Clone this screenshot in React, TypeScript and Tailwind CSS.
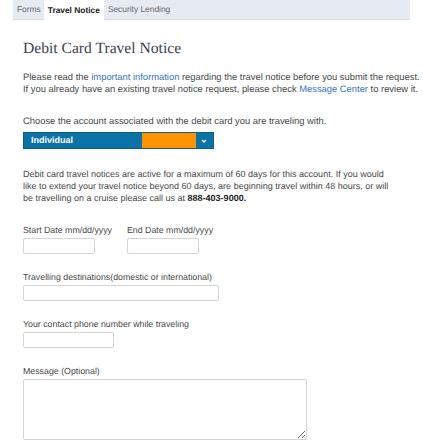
import React from 'react';

const font = { fontFamily: '"Liberation Sans", Arial, sans-serif', textRendering: 'geometricPrecision' as const };

const Field: React.FC<{ label: string; width: string }> = ({ label, width }) => (
  <div className="flex flex-col">
    <label className="text-[8.8px] leading-[12px] text-[#484848] whitespace-nowrap">{label}</label>
    <input className={`${width} h-[16px] mt-[2px] border border-[#d4d4d4] rounded-[2px] bg-white`} />
  </div>
);

const App: React.FC = () => {
  return (
    <div className="w-[423px] h-[447px] bg-white overflow-hidden" style={font}>
      {/* tabs */}
      <div className="mx-[13px] h-[20px] flex items-end bg-[#e6ebf2] border-b border-[#d6dfe8] pl-[1px] text-[8.4px]">
        <div className="px-[3px] h-[19px] flex items-center text-[#666]">Forms</div>
        <div className="px-[4px] h-[20px] -mb-px flex items-center bg-white font-bold text-[#222]">Travel Notice</div>
        <div className="px-[4px] h-[19px] flex items-center text-[#666]">Security Lending</div>
      </div>

      <div className="px-[23px]">
        <h1 className="mt-[18px] text-[15.6px] leading-[22px] text-[#3b4452]" style={{ fontFamily: '"Liberation Serif", serif' }}>
          Debit Card Travel Notice
        </h1>

        <p className="mt-[11px] text-[9.4px] leading-[12px] text-[#484848] whitespace-nowrap">
          Please read the <span className="text-[#3a73c4]">important information</span> regarding the travel notice before you submit the request.
          <br />
          If you already have an existing travel notice request, please check <span className="text-[#3a73c4]">Message Center</span> to review it.
        </p>

        <p className="mt-[20px] text-[9.4px] leading-[12px] text-[#484848]">
          Choose the account associated with the debit card you are traveling with.
        </p>

        <div className="mt-[5px] w-[191px] h-[17px] bg-[#0b72a6] border border-[#0a5f8a] flex items-center pl-[7px] pr-[5px]">
          <span className="text-white font-bold text-[9px] flex-1">Individual</span>
          <span className="w-[54px] h-[15px] bg-[#ff9400]" />
          <svg width="8" height="8" viewBox="0 0 8 8" className="ml-[4px]">
            <path d="M2 3 L4 5 L6 3" stroke="white" strokeWidth="1.4" fill="none" />
          </svg>
        </div>

        <p className="mt-[19px] w-[375px] text-[9px] leading-[12px] text-[#484848]">
          Debit card travel notices are active for a maximum of 60 days for this account. If you would like to extend your travel notice beyond 60 days, are beginning travel within 48 hours, or will be travelling on a cruise please call us at <span className="font-bold text-[#222]">888-403-9000.</span>
        </p>

        <div className="mt-[20px] flex">
          <div className="w-[104px]">
            <Field label="Start Date mm/dd/yyyy" width="w-[72px]" />
          </div>
          <Field label="End Date mm/dd/yyyy" width="w-[72px]" />
        </div>

        <div className="mt-[17px]">
          <Field label="Travelling destinations(domestic or international)" width="w-[196px]" />
        </div>

        <div className="mt-[17px]">
          <Field label="Your contact phone number while traveling" width="w-[91px]" />
        </div>

        <div className="mt-[17px] flex flex-col">
          <label className="text-[8.8px] leading-[12px] text-[#484848]">Message (Optional)</label>
          <textarea className="w-[284px] h-[61px] mt-[2px] border border-[#d4d4d4] rounded-[2px] bg-white" />
        </div>
      </div>
    </div>
  );
};

export default App;
